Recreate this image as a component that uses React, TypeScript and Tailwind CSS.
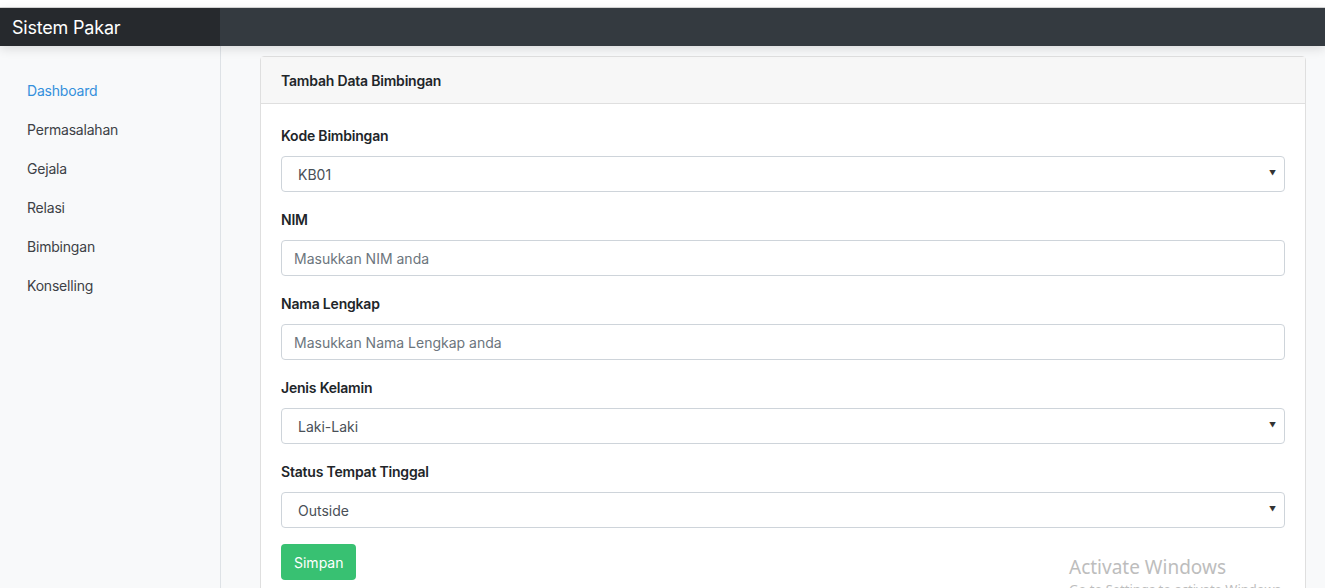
const menu = ["Dashboard", "Permasalahan", "Gejala", "Relasi", "Bimbingan", "Konselling"];

function Select({ value }: { value: string }) {
  return (
    <div className="relative h-[36px] w-full rounded-[4px] border border-[#ced4da] bg-white">
      <span className="absolute left-[16px] top-0 leading-[35px] text-[14px] text-[#495057]">{value}</span>
      <span className="absolute right-[8px] top-[13px] text-[7px] leading-none text-[#333]">▼</span>
    </div>
  );
}

function Input({ placeholder }: { placeholder: string }) {
  return (
    <input
      className="h-[36px] w-full rounded-[4px] border border-[#ced4da] bg-white px-[12px] text-[14px] text-[#495057] placeholder:text-[#6c757d] focus:outline-none"
      placeholder={placeholder}
    />
  );
}

function Field({ label, children }: { label: string; children: React.ReactNode }) {
  return (
    <div className="mb-4">
      <div className="mb-2 h-[24px] leading-[24px] text-[14px] font-semibold tracking-[-0.2px] text-[#212529]">{label}</div>
      {children}
    </div>
  );
}

export default function App() {
  return (
    <div
      className="relative h-[588px] w-[1325px] overflow-hidden bg-[#f8f9fa]"
      style={{ fontFamily: "Inter, 'Noto Sans', sans-serif" }}
    >
      {/* top strip */}
      <div className="h-[8px] border-b border-[#d6d6d6] bg-white" />

      {/* navbar */}
      <div className="relative z-10 flex h-[38px] bg-[#343a40] shadow-[0_3px_10px_rgba(0,0,0,0.12)]">
        <div className="flex w-[220px] items-center bg-[#26292d] px-[12px] text-[18px] tracking-[-0.2px] text-white">
          Sistem Pakar
        </div>
        <div className="flex-1" />
      </div>

      <div className="flex">
        {/* sidebar */}
        <div className="h-[542px] w-[221px] shrink-0 border-r border-[#dee2e6] bg-[#f8f9fa] pt-[25px]">
          {menu.map((m, i) => (
            <div
              key={m}
              className={`flex h-[39px] items-center px-[27px] text-[14px] tracking-[-0.2px] ${
                i === 0 ? "text-[#3490dc]" : "text-[#3d4146]"
              }`}
            >
              {m}
            </div>
          ))}
        </div>

        {/* main */}
        <div className="flex-1 pl-[39px] pr-[19px] pt-[10px]">
          <div className="h-[600px] rounded-[4px] border border-[#dfdfdf] bg-white">
            <div className="flex h-[47px] items-center border-b border-[#dfdfdf] bg-[#f7f7f7] px-[20px] text-[14px] font-semibold tracking-[-0.2px] text-[#212529]">
              Tambah Data Bimbingan
            </div>
            <div className="px-[20px] pt-[20px]">
              <Field label="Kode Bimbingan">
                <Select value="KB01" />
              </Field>
              <Field label="NIM">
                <Input placeholder="Masukkan NIM anda" />
              </Field>
              <Field label="Nama Lengkap">
                <Input placeholder="Masukkan Nama Lengkap anda" />
              </Field>
              <Field label="Jenis Kelamin">
                <Select value="Laki-Laki" />
              </Field>
              <Field label="Status Tempat Tinggal">
                <Select value="Outside" />
              </Field>
              <button className="h-[36px] rounded-[4px] bg-[#38c172] px-[13px] text-[14px] text-white">
                Simpan
              </button>
            </div>
          </div>
        </div>
      </div>

      {/* windows watermark */}
      <div className="pointer-events-none absolute left-[1069px] top-[554px] text-[#bdbdbd]" style={{ fontFamily: "'Noto Sans', sans-serif" }}>
        <div className="text-[19px] leading-[26px]">Activate Windows</div>
        <div className="text-[13px] leading-[18px] whitespace-nowrap">Go to Settings to activate Windows.</div>
      </div>
    </div>
  );
}
